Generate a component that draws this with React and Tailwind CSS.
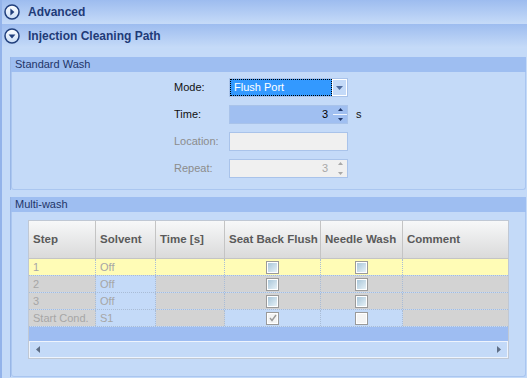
const font = { fontFamily: '"Liberation Sans", Arial, sans-serif' };

function ExpandIcon({ open }) {
  return (
    <svg width="16" height="16" viewBox="0 0 16 16">
      <defs>
        <linearGradient id={open ? 'gOpen' : 'gClosed'} x1="0" y1="0" x2="0" y2="1">
          <stop offset="0" stopColor="#ffffff" />
          <stop offset="1" stopColor="#c9dcf6" />
        </linearGradient>
      </defs>
      <circle cx="8" cy="8" r="7" fill={`url(#${open ? 'gOpen' : 'gClosed'})`} stroke="#213f7c" strokeWidth="1.5" />
      {open ? (
        <path d="M4.6 6.4 L11.4 6.4 L8 10.4 Z" fill="#213f7c" />
      ) : (
        <path d="M6.4 4.6 L10.4 8 L6.4 11.4 Z" fill="#213f7c" />
      )}
    </svg>
  );
}

function SectionHeader({ open, children }) {
  return (
    <div className="flex h-[24px] items-center gap-[8px] bg-gradient-to-b from-[#9dbcef] to-[#c6dbf8] pl-[2px]">
      <ExpandIcon open={open} />
      <span className="text-[12px] font-bold text-[#1f3b78]">{children}</span>
    </div>
  );
}

function GroupBox({ title, className, children }) {
  return (
    <div className={`ml-[8px] flex w-[516px] flex-col border-l border-[#98b6e6] ${className}`}>
      <div className="flex h-[15px] items-center bg-[#9ebef1] pl-[4px] text-[11px] text-[#1e3568]">{title}</div>
      <div className="flex flex-1 flex-col rounded-b-[3px] border border-t-0 border-[#aac6f0] bg-[#c4daf8]">{children}</div>
    </div>
  );
}

function Spinner({ disabled }) {
  const c = disabled ? '#a8a8a8' : '#1e3568';
  return (
    <div className="flex h-full w-[14px] flex-col items-center justify-center gap-[3px]">
      <svg width="5" height="3" viewBox="0 0 5 3"><path d="M0 3 L2.5 0 L5 3 Z" fill={c} /></svg>
      <div className={`h-px w-[14px] ${disabled ? 'bg-transparent' : 'bg-[#eef4fd]'}`} />
      <svg width="5" height="3" viewBox="0 0 5 3"><path d="M0 0 L5 0 L2.5 3 Z" fill={c} /></svg>
    </div>
  );
}

function Checkbox({ checked, plain }) {
  return (
    <div className="flex h-[13px] w-[13px] items-center justify-center border border-[#9a9a9a] bg-white p-px">
      <div className={`flex h-full w-full items-center justify-center ${plain || checked ? 'bg-[#f4f4f4]' : 'bg-gradient-to-br from-[#a9c6d9] to-[#e6f1f7]'}`}>
        {checked && (
          <svg width="8" height="8" viewBox="0 0 8 8">
            <path d="M1 4 L3 6.5 L7 1" fill="none" stroke="#9a9a9a" strokeWidth="1.4" />
          </svg>
        )}
      </div>
    </div>
  );
}

const cols = [
  { key: 'step', label: 'Step', w: 'w-[67px]' },
  { key: 'solvent', label: 'Solvent', w: 'w-[60px]' },
  { key: 'time', label: 'Time [s]', w: 'w-[69px]' },
  { key: 'seat', label: 'Seat Back Flush', w: 'w-[96px]' },
  { key: 'needle', label: 'Needle Wash', w: 'w-[82px]' },
  { key: 'comment', label: 'Comment', w: 'flex-1' },
];

const rows = [
  { step: '1', solvent: 'Off', seat: false, needle: false, current: true },
  { step: '2', solvent: 'Off', seat: false, needle: false },
  { step: '3', solvent: 'Off', seat: false, needle: false },
  { step: 'Start Cond.', solvent: 'S1', seat: true, needle: false, start: true },
];

function cellBg(row, key) {
  if (row.current) return 'bg-[#fffcb6]';
  if (key === 'solvent') return 'bg-[#c4daf8]';
  if (row.start && (key === 'seat' || key === 'needle')) return 'bg-[#c4daf8]';
  return 'bg-[#d3d3d3]';
}

function FormRow({ label, disabled, children }) {
  return (
    <div className="flex h-[19px] items-center">
      <span className={`w-[55px] text-[11px] ${disabled ? 'text-[#8c8c8c]' : 'text-[#111]'}`}>{label}</span>
      {children}
    </div>
  );
}

export default function App() {
  return (
    <div className="h-[378px] w-[527px] overflow-hidden border-l-2 border-[#93b3ea] bg-[#c4daf8]" style={font}>
      <SectionHeader open={false}>Advanced</SectionHeader>
      <SectionHeader open>Injection Cleaning Path</SectionHeader>

      <div className="flex flex-col gap-[7px] pt-[9px]">
        <GroupBox title="Standard Wash" className="h-[133px]">
          <div className="flex flex-col gap-[8px] pl-[162px] pt-[6px]">
            <FormRow label="Mode:">
              <div className="flex h-[19px] w-[119px] items-center border border-[#a9c3ea] bg-white">
                <div className="flex h-full flex-1 items-center border border-dotted border-black bg-[#3399ff] pl-[3px] text-[11px] text-white">
                  Flush Port
                </div>
                <div className="flex h-full w-[15px] items-center justify-center border border-white bg-[#c4daf8]">
                  <svg width="7" height="4" viewBox="0 0 7 4"><path d="M0 0 L7 0 L3.5 4 Z" fill="#4d6a9c" /></svg>
                </div>
              </div>
            </FormRow>
            <FormRow label="Time:">
              <div className="flex h-[19px] w-[119px] items-center border border-[#a9c3ea] bg-[#a0bff1]">
                <span className="flex-1 pr-[5px] text-right text-[11px] text-black">3</span>
                <Spinner />
              </div>
              <span className="ml-[8px] text-[11px] text-[#111]">s</span>
            </FormRow>
            <FormRow label="Location:" disabled>
              <div className="h-[19px] w-[119px] border border-[#a9c3ea] bg-[#f0f0f0]" />
            </FormRow>
            <FormRow label="Repeat:" disabled>
              <div className="flex h-[19px] w-[119px] items-center border border-[#a9c3ea] bg-[#f0f0f0]">
                <span className="flex-1 pr-[5px] text-right text-[11px] text-[#a8a8a8]">3</span>
                <Spinner disabled />
              </div>
            </FormRow>
          </div>
        </GroupBox>

        <GroupBox title="Multi-wash" className="h-[180px]">
          <div className="ml-[16px] mt-[8px] flex w-[481px] flex-col border border-[#c0c8d4]">
            <div className="flex h-[37px]">
              {cols.map((c, i) => (
                <div
                  key={c.key}
                  className={`${c.w} flex items-center bg-gradient-to-b from-[#f7f8f9] to-[#dadada] pl-[4px] text-[11.5px] font-bold text-[#5a5a5a] ${i < cols.length - 1 ? 'border-r border-[#c4c4c4]' : ''}`}
                >
                  {c.label}
                </div>
              ))}
            </div>
            <div className="border-t border-[#c4c4c4]">
              {rows.map((r, ri) => (
                <div key={ri} className="flex h-[17px] border-b border-dotted border-[#a9bcd6]">
                  {cols.map((c, i) => (
                    <div
                      key={c.key}
                      className={`${c.w} flex items-center ${cellBg(r, c.key)} ${i < cols.length - 1 ? 'border-r border-dotted border-[#a9bcd6]' : ''} ${c.key === 'seat' || c.key === 'needle' ? 'justify-center' : 'pl-[4px]'} text-[11px] text-[#a6a6a6]`}
                    >
                      {c.key === 'step' && r.step}
                      {c.key === 'solvent' && r.solvent}
                      {c.key === 'seat' && <Checkbox checked={r.seat} plain={r.start} />}
                      {c.key === 'needle' && <Checkbox checked={r.needle} plain={r.start} />}
                    </div>
                  ))}
                </div>
              ))}
            </div>
            <div className="h-[14px] bg-[#9ebdf2]" />
            <div className="flex h-[17px] items-center justify-between border border-[#eef4fd] bg-[#c4daf8] px-[6px]">
              <svg width="4" height="7" viewBox="0 0 4 7"><path d="M4 0 L0 3.5 L4 7 Z" fill="#5e6e86" /></svg>
              <svg width="4" height="7" viewBox="0 0 4 7"><path d="M0 0 L4 3.5 L0 7 Z" fill="#5e6e86" /></svg>
            </div>
          </div>
        </GroupBox>
      </div>
    </div>
  );
}
